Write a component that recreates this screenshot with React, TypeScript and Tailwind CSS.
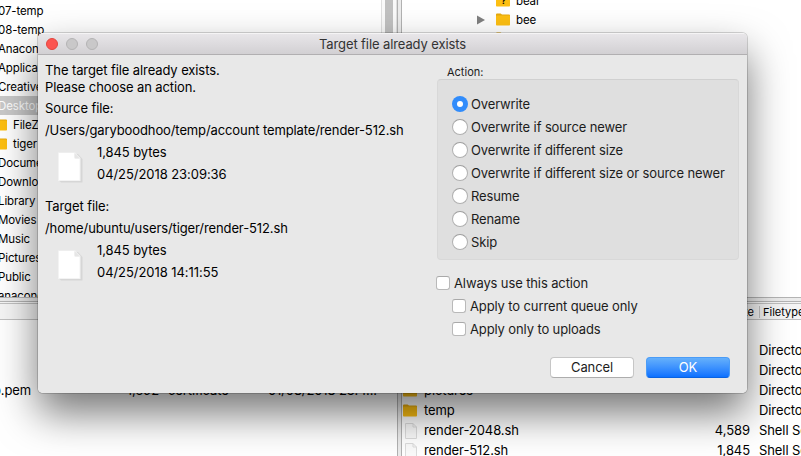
import React from "react";

function Folder({ className = "" }: { className?: string }) {
  return (
    <svg className={"shrink-0 " + className} width="14" height="13" viewBox="0 0 14 13">
      <path d="M0 1.5Q0 0.5 1 .5H4.6L6 1.500H13Q14 1.500 14 2.500V5H0Z" fill="#e5a90e" />
      <rect y="2.4" width="14" height="10.2" rx=".8" fill="#fdbf12" />
    </svg>
  );
}

function SmallFile() {
  return (
    <svg className="ml-[2px] shrink-0" width="12" height="16" viewBox="0 0 12 16">
      <path d="M.5.5H8L11.5 4V15.5H.5Z" fill="#fafafa" stroke="#dcdcdc" />
      <path d="M8 .5V4H11.5" fill="none" stroke="#dcdcdc" />
    </svg>
  );
}

function BigFile() {
  return (
    <svg className="mt-[10px] ml-[13px] shrink-0" width="26" height="32" viewBox="0 0 26 32">
      <path d="M1.500 3H20L24.500 8V31Q24.500 31.500 24 31.500H3L1.500 30Z" fill="#d6d6d6" />
      <path d="M0 1.500H17L22.500 7V30H0Z" fill="#f3f3f3" />
      <path d="M1 2H16.500V7.500H21.500V29H1Z" fill="#fff" />
      <path d="M16.500 2L22 7.500H17.500Q16.500 7.500 16.500 6.500Z" fill="#e6e6e6" />
    </svg>
  );
}

const tree = ["07-temp", "08-temp", "Anaconda", "Applications", "Creative Cloud", "Desktop", "FileZilla", "tiger", "Documents", "Downloads", "Library", "Movies", "Music", "Pictures", "Public", "anaconda"];

function LeftTree() {
  return (
    <div className="flex h-[297px] overflow-hidden bg-white text-[11.5px] tracking-[-0.12px]">
      <div className="w-[381px] pt-px">
        {tree.map((name, i) => (
          <div key={name} className={"flex h-[19px] items-center " + (name === "Desktop" ? "bg-[#c9c9c9] text-white" : "")}>
            {i === 6 || i === 7 ? (
              <>
                <Folder className="-ml-[7px]" />
                <span className="ml-[6px] pt-[2px]">{name}</span>
              </>
            ) : (
              <span className="-ml-[2px] pt-[2px]">{name}</span>
            )}
          </div>
        ))}
      </div>
      <div className="flex w-4 justify-center border-x border-[#e0e0e0] bg-[#fafafa]">
        <div className="h-full w-2 bg-[#c1c1c1]" />
      </div>
    </div>
  );
}

function Splitter() {
  return (
    <>
      <div className="h-[5px] border-y border-[#b4b4b4] bg-[#ececec]" />
      <div className="h-px bg-[#f6f6f6]" />
    </>
  );
}

function RightTree() {
  return (
    <div className="h-[297px] overflow-hidden bg-white text-[11.5px] tracking-[-0.12px]">
      <div className="-mt-[9px]">
        {["bear", "bee", "boar"].map((name) => (
          <div key={name} className="flex h-[19px] items-center pl-[75px]">
            {name === "bee" ? (
              <svg width="8" height="10" viewBox="0 0 8 10"><path d="M0 0.500L8 5L0 9.500Z" fill="#808080" /></svg>
            ) : (
              <span className="w-2" />
            )}
            <span className="relative ml-[11px]">
              <Folder />
              {name === "bear" && <span className="absolute top-[2px] left-[5px] text-[9px] leading-none font-bold">?</span>}
            </span>
            <span className="ml-[6px] pt-[3px]">{name}</span>
          </div>
        ))}
      </div>
    </div>
  );
}

const files = [
  { name: "..", size: "", type: "", icon: "folder" },
  { name: "birds", size: "", type: "Directory", icon: "folder" },
  { name: "maps", size: "", type: "Directory", icon: "folder" },
  { name: "pictures", size: "", type: "Directory", icon: "folder" },
  { name: "temp", size: "", type: "Directory", icon: "folder" },
  { name: "render-2048.sh", size: "4,589", type: "Shell Script", icon: "file" },
  { name: "render-512.sh", size: "1,845", type: "Shell Script", icon: "file" },
];

function RightFiles() {
  return (
    <div className="bg-white">
      <div className="flex h-[17px] items-center border-y border-[#c0c0c0] bg-[#f5f5f5] text-[11px]">
        <span className="w-[352px] shrink-0 pt-px text-right">Filesize</span>
        <span className="ml-[5px] h-3 w-px shrink-0 bg-[#c4c4c4]" />
        <span className="ml-[3px] pt-px">Filetype</span>
      </div>
      {files.map((f) => (
        <div key={f.name} className="flex h-5 items-center pl-px pt-px text-[13px] tracking-[-0.08px]">
          <span className="flex w-[21px] shrink-0">{f.icon === "folder" ? <Folder /> : <SmallFile />}</span>
          <span className="w-[240px] shrink-0">{f.name}</span>
          <span className="w-[86px] shrink-0 text-right">{f.size}</span>
          <span className="ml-[9px] whitespace-nowrap">{f.type}</span>
        </div>
      ))}
    </div>
  );
}

function Lines({ label, path, date }: { label: string; path: string; date: string }) {
  return (
    <div className="leading-[22px]">
      <div>{label}</div>
      <div className="tracking-[-0.11px]">{path}</div>
      <div className="flex">
        <BigFile />
        <div className="ml-[13px]">
          <div>1,845 bytes</div>
          <div className="tracking-[-0.06px]">{date}</div>
        </div>
      </div>
    </div>
  );
}

const actions = ["Overwrite", "Overwrite if source newer", "Overwrite if different size", "Overwrite if different size or source newer", "Resume", "Rename", "Skip"];

function Check({ label }: { label: string }) {
  return (
    <div className="flex h-[23px] items-center">
      <span className="-mt-px h-[14px] w-[14px] rounded-[3px] border border-[#b9b9b9] border-t-[#a9a9a9] bg-white" />
      <span className="ml-1">{label}</span>
    </div>
  );
}

function Dialog() {
  return (
    <div className="absolute top-[33px] left-[38px] flex h-[360px] w-[709px] flex-col overflow-hidden rounded-[5px] bg-[#e8e8e8] text-[13px] tracking-[-0.1px]">
      <div className="flex h-[22px] shrink-0 items-center border-t border-b border-t-[#f5f4f5] border-b-[#b1afb1] bg-linear-to-b from-[#e8e6e9] to-[#d2d0d3] pl-2">
        <div className="flex w-[52px] gap-2">
          <span className="h-3 w-3 rounded-full border border-[#e2463f] bg-[#fc5550]" />
          <span className="h-3 w-3 rounded-full border border-[#b4b3b4] bg-[#c9c8c9]" />
          <span className="h-3 w-3 rounded-full border border-[#b4b3b4] bg-[#c9c8c9]" />
        </div>
        <span className="w-[589px] pt-px text-center text-[#333]">Target file already exists</span>
      </div>
      <div className="flex flex-1">
        <div className="w-[391px] pt-[7px] pl-[7px]">
          <div className="leading-[17px]">
            <div>The target file already exists.</div>
            <div>Please choose an action.</div>
          </div>
          <div className="mt-px">
            <Lines label="Source file:" path="/Users/garyboodhoo/temp/account template/render-512.sh" date="04/25/2018 23:09:36" />
          </div>
          <div className="mt-[10px]">
            <Lines label="Target file:" path="/home/ubuntu/users/tiger/render-512.sh" date="04/25/2018 14:11:55" />
          </div>
        </div>
        <div className="w-[310px] pt-[10px] pl-2 tracking-[-0.12px] text-[#1c1c1c]">
          <div className="h-[14px] pl-[10px] text-[11px] leading-[14px] tracking-normal">Action:</div>
          <div className="h-[181px] w-[302px] rounded-[4px] border border-[#d8d8d8] border-t-[#d0d0d0] bg-[#dfdfdf] pt-[13px] pl-[14px]">
            {actions.map((a, i) => (
              <div key={a} className="flex h-[23px] items-center">
                {i === 0 ? (
                  <span className="-mt-px flex h-4 w-4 items-center justify-center rounded-full bg-[#318cfb]">
                    <span className="h-[6px] w-[6px] rounded-full bg-white" />
                  </span>
                ) : (
                  <span className="-mt-px h-4 w-4 rounded-full border border-[#b0b0b0] border-t-[#9d9d9d] bg-white" />
                )}
                <span className="ml-[3px] pt-px whitespace-nowrap">{a}</span>
              </div>
            ))}
          </div>
          <div className="mt-[12px] -ml-px">
            <Check label="Always use this action" />
            <div className="pl-4">
              <Check label="Apply to current queue only" />
              <Check label="Apply only to uploads" />
            </div>
          </div>
          <div className="mt-[16px] flex gap-3 pl-[113px]">
            <div className="flex h-[21px] w-[84px] items-center justify-center rounded-[4px] border border-[#c6c6c6] border-b-[#adadad] bg-white">Cancel</div>
            <div className="flex h-[21px] w-[84px] items-center justify-center rounded-[4px] border border-[#4a9cf7] border-b-[#0a62e0] bg-linear-to-b from-[#65b0fb] to-[#0a70ff] text-white">OK</div>
          </div>
        </div>
      </div>
    </div>
  );
}

export default function App() {
  return (
    <div className="relative h-[456px] w-[801px] overflow-hidden bg-white font-['Inter','Liberation_Sans',sans-serif] text-black">
      <div className="flex h-full">
        <div className="w-[397px]">
          <LeftTree />
          <Splitter />
          <div className="h-[17px] border-y border-[#c0c0c0] bg-[#f5f5f5]" />
          <div className="mt-[61px] flex h-5 items-center text-[13px] tracking-[-0.12px]">
            <span className="-ml-[7px] w-[38px] text-right">b.pem</span>
            <span className="w-[128px] text-right">1,692</span>
            <span className="ml-[9px] w-[100px]">certificate</span>
            <span>01/08/2018 23:4...</span>
          </div>
        </div>
        <div className="w-[5px] border-x border-[#b2b2b2] bg-[#ececec]" />
        <div className="w-[399px] overflow-hidden">
          <RightTree />
          <Splitter />
          <RightFiles />
        </div>
      </div>
      <div className="absolute top-[33px] left-[38px] h-[360px] w-[709px] rounded-[5px] shadow-[0_0_0_1px_rgba(0,0,0,0.16),0_20px_42px_rgba(0,0,0,0.54)]" />
      <Dialog />
    </div>
  );
}
